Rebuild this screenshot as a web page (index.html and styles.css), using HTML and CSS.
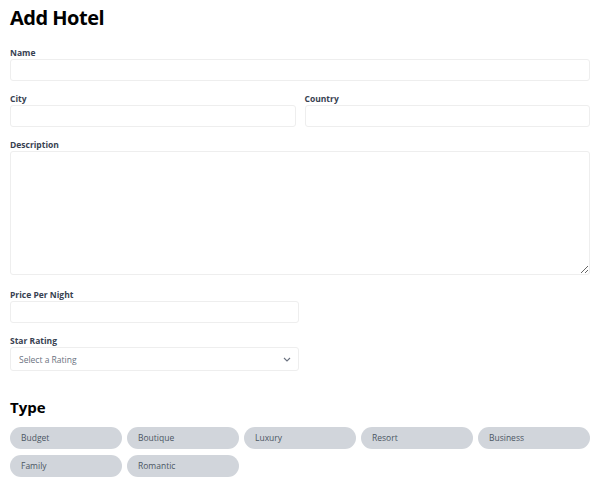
FILE: index.html
```html
<!DOCTYPE html>
<html>
<head>
<meta charset="utf-8">
<link rel="stylesheet" href="styles.css">
</head>
<body>
<form class="form">
  <h1 class="title">Add Hotel</h1>
  <label class="field">
    <span class="label">Name</span>
    <input class="input" type="text">
  </label>
  <div class="row">
    <label class="field">
      <span class="label">City</span>
      <input class="input" type="text">
    </label>
    <label class="field">
      <span class="label">Country</span>
      <input class="input" type="text">
    </label>
  </div>
  <label class="field field-tall">
    <span class="label">Description</span>
    <textarea class="textarea"></textarea>
  </label>
  <label class="field half">
    <span class="label">Price Per Night</span>
    <input class="input" type="number">
  </label>
  <label class="field half">
    <span class="label">Star Rating</span>
    <span class="select">
      <span class="select-text">Select a Rating</span>
      <svg class="chev" width="8" height="5" viewBox="0 0 8 5"><path d="M1 1l3 3 3-3" fill="none" stroke="#6b7280" stroke-width="1.1"/></svg>
    </span>
  </label>
  <h2 class="subtitle">Type</h2>
  <div class="chips">
    <span class="chip">Budget</span>
    <span class="chip">Boutique</span>
    <span class="chip">Luxury</span>
    <span class="chip">Resort</span>
    <span class="chip">Business</span>
    <span class="chip">Family</span>
    <span class="chip">Romantic</span>
  </div>
</form>
</body>
</html>
```
FILE: styles.css
```css
* { box-sizing: border-box; }
body {
  margin: 0;
  padding: 0 15px 0 10px;
  background: #fff;
  font-family: "Open Sans", "Noto Sans", sans-serif;
  color: #111;
}
.form {
  display: flex;
  flex-direction: column;
  width: 580px;
}
.title {
  margin: 4px 0 15px;
  font-size: 20px;
  line-height: 28px;
  font-weight: 700;
  letter-spacing: -0.5px;
  color: #000;
}
.field {
  display: flex;
  flex-direction: column;
  margin-bottom: 12px;
}
.field-tall { margin-bottom: 14px; }
.half { width: 289px; }
.label {
  font-size: 8.5px;
  line-height: 12px;
  font-weight: 700;
  color: #374151;
}
.input, .textarea, .select {
  display: block;
  width: 100%;
  height: 22px;
  border: 1px solid #eeeeee;
  border-radius: 3px;
  background: #fff;
  outline: none;
  margin: 0;
  padding: 0 8px;
  font: inherit;
}
.textarea {
  height: 124px;
  resize: vertical;
}
.select {
  height: 24px;
  display: flex;
  align-items: center;
  justify-content: space-between;
}
.select-text {
  font-size: 8.5px;
  color: #6b7280;
}
.chev { margin-right: -1px; }
.row {
  display: grid;
  grid-template-columns: 1fr 1fr;
  column-gap: 9px;
}
.subtitle {
  margin: 14px 0 10px;
  font-size: 15px;
  line-height: 20px;
  font-weight: 700;
  color: #000;
}
.chips {
  display: grid;
  grid-template-columns: repeat(5, 1fr);
  gap: 6px 5px;
}
.chip {
  height: 22px;
  border-radius: 11px;
  background: #d1d5db;
  color: #4b5563;
  font-size: 8.5px;
  line-height: 22px;
  padding-left: 11px;
}
```
